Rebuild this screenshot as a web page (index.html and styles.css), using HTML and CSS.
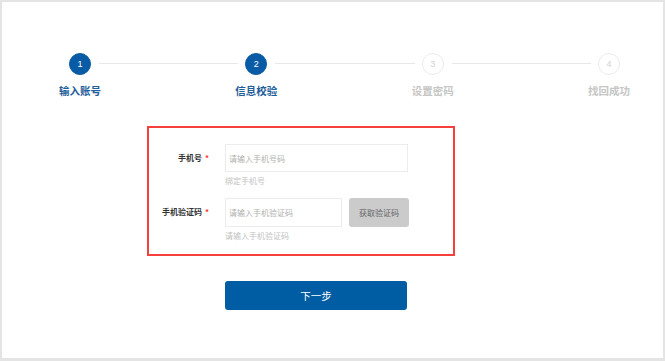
FILE: index.html
```html
<!DOCTYPE html>
<html>
<head>
  <title>找回密码</title>
<meta name="viewport" content="width=device-width, initial-scale=1">
<link rel="stylesheet" href="styles.css">
</head>
<body>
<div class="frame">
  <div class="steps">
    <div class="step active">
      <div class="step-head"><span class="dot">1</span><span class="label">输入账号</span></div>
      <div class="line"></div>
    </div>
    <div class="step active">
      <div class="step-head"><span class="dot">2</span><span class="label">信息校验</span></div>
      <div class="line"></div>
    </div>
    <div class="step">
      <div class="step-head"><span class="dot">3</span><span class="label">设置密码</span></div>
      <div class="line"></div>
    </div>
    <div class="step last">
      <div class="step-head"><span class="dot">4</span><span class="label">找回成功</span></div>
    </div>
  </div>

  <div class="form-box">
    <div class="form-row">
      <label class="form-label">手机号<em>*</em></label>
      <div class="form-field">
        <input class="input wide" type="text" placeholder="请输入手机号码">
        <div class="hint">绑定手机号</div>
      </div>
    </div>
    <div class="form-row">
      <label class="form-label">手机验证码<em>*</em></label>
      <div class="form-field">
        <div class="code-line">
          <input class="input short" type="text" placeholder="请输入手机验证码">
          <button class="code-btn" type="button">获取验证码</button>
        </div>
        <div class="hint">请输入手机验证码</div>
      </div>
    </div>
  </div>

  <button class="next" type="button">下一步</button>
</div>
</body>
</html>
```

FILE: styles.css
```css
body {
  margin: 0;
  font-family: "Noto Sans CJK SC", "Noto Sans", Arial, sans-serif;
  background: #fff;
}

.frame {
  width: 665px;
  height: 361px;
  box-sizing: border-box;
  border: 2px solid #e4e4e4;
  border-bottom-width: 3px;
  background: #fff;
  overflow: hidden;
}

/* steps */
.steps {
  display: flex;
  width: 551px;
  margin-left: 67px;
  padding-top: 51px;
}

.step {
  flex: 1;
  display: flex;
  align-items: flex-start;
}

.step.last {
  flex: none;
}

.step-head {
  width: 22px;
  display: flex;
  flex-direction: column;
  align-items: center;
}

.dot {
  width: 22px;
  height: 22px;
  box-sizing: border-box;
  border-radius: 50%;
  border: 1px solid #ebebeb;
  color: #d2d2d2;
  font-family: Arial, "Liberation Sans", sans-serif;
  font-size: 9px;
  line-height: 20px;
  text-align: center;
}

.label {
  margin-top: 9px;
  white-space: nowrap;
  font-size: 10.5px;
  line-height: 14px;
  font-weight: bold;
  color: #c6c6c6;
}

.step.active .dot {
  background: #0a5ba6;
  border-color: #0a5ba6;
  color: #fff;
}

.step.active .label {
  color: #1f5d9b;
}

.line {
  flex: 1;
  height: 1px;
  margin: 10px 7px 0 8px;
  background: #e8e8e8;
}

/* form */
.form-box {
  width: 308px;
  box-sizing: border-box;
  margin: 28px 0 0 145px;
  border: 2px solid #f6403b;
  padding: 16px 0 12px;
}

.form-row {
  display: flex;
  margin-bottom: 11px;
}

.form-row:last-child {
  margin-bottom: 0;
}

.form-label {
  width: 76px;
  box-sizing: border-box;
  padding-right: 16px;
  height: 28px;
  line-height: 28px;
  text-align: right;
  font-size: 8px;
  font-weight: bold;
  color: #333;
}

.form-label em {
  font-style: normal;
  color: #f33;
  margin-left: 3px;
}

.input {
  display: block;
  height: 28px;
  box-sizing: border-box;
  border: 1px solid #ececec;
  padding: 0 3px;
  font-family: inherit;
  font-size: 8px;
  color: #333;
  outline: none;
}

.input::placeholder {
  color: #b0b0b0;
}

.input.wide {
  width: 183px;
}

.input.short {
  width: 117px;
  height: 29px;
}

.code-line {
  display: flex;
}

.code-btn {
  width: 60px;
  height: 29px;
  margin-left: 7px;
  border: 0;
  border-radius: 3px;
  background: #cbcbcb;
  color: #666;
  font-family: inherit;
  font-size: 8px;
  padding: 0;
}

.hint {
  margin-top: 3px;
  font-size: 8px;
  line-height: 12px;
  color: #c2c2c2;
}

.next {
  display: block;
  width: 182px;
  height: 29px;
  margin: 25px 0 0 223px;
  border: 0;
  border-radius: 3px;
  background: #005ca3;
  color: #fff;
  font-family: inherit;
  font-size: 10.5px;
  padding: 0;
}
```
